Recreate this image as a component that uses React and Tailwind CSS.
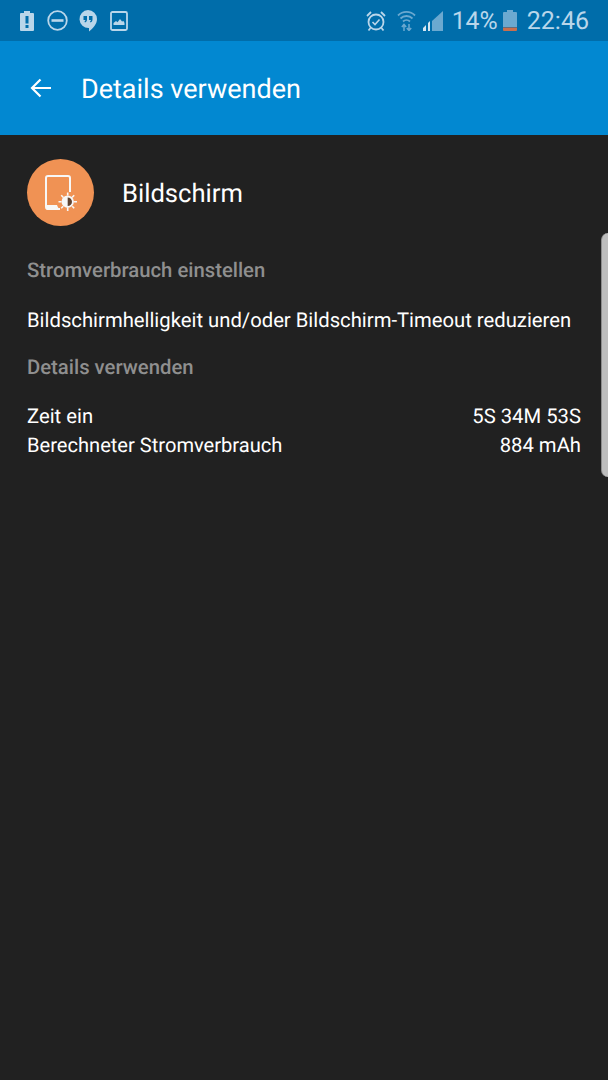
import React from "react";

const StatusLeft = () => (
  <div className="flex items-center">
    <svg className="ml-[20px]" width="14" height="20" viewBox="0 0 14 20">
      <path fill="#b9d6ea" d="M4 0h6v2h3a1 1 0 0 1 1 1v16a1 1 0 0 1-1 1H1a1 1 0 0 1-1-1V3a1 1 0 0 1 1-1h3z" />
      <rect x="5.5" y="5" width="3" height="7.5" fill="#006daa" />
      <rect x="5.5" y="14" width="3" height="3" fill="#006daa" />
    </svg>
    <svg className="ml-[13px]" width="21" height="21" viewBox="0 0 21 21">
      <circle cx="10.5" cy="10.5" r="9.3" fill="none" stroke="#b9d6ea" strokeWidth="1.8" />
      <rect x="4.5" y="9.2" width="12" height="2.6" fill="#b9d6ea" />
    </svg>
    <svg className="ml-[11px]" width="18" height="22" viewBox="0 0 18 22">
      <path fill="#b9d6ea" d="M9 0a9 9 0 0 1 9 9c0 5-4 9.500-8 12.500V18a9 9 0 0 1-1-18z" />
      <path fill="#006daa" d="M4.500 6h3.500v3.500c0 1.500-.8 2.500-2 3l-.6-1c.7-.3 1-.8 1-1.500H4.500zM10 6h3.500v3.500c0 1.500-.8 2.500-2 3l-.6-1c.7-.3 1-.8 1-1.500H10z" />
    </svg>
    <svg className="ml-[13px]" width="18" height="20" viewBox="0 0 18 20">
      <rect x="1" y="1" width="16" height="18" rx="1.500" fill="none" stroke="#b9d6ea" strokeWidth="1.800" />
      <path fill="#b9d6ea" d="M3.500 14v-2l2.500-2 1.500 1.200 2.500-3.200 2 2.500 1.500-.5 1 2V14z" />
    </svg>
  </div>
);

const StatusRight = () => (
  <div className="flex items-center mr-[19px]">
    <svg width="22" height="22" viewBox="0 0 22 22" fill="none" stroke="#b9d6ea">
      <circle cx="11" cy="12" r="7.500" strokeWidth="1.800" />
      <path d="M7.500 12l2.500 2.500 4.500-5" strokeWidth="1.600" />
      <path d="M2 6l4-4M20 6l-4-4M5.500 18l-2 2.500M16.500 18l2 2.500" strokeWidth="1.800" />
    </svg>
    <svg className="ml-[10px]" width="19" height="21" viewBox="0 0 19 21" fill="none" stroke="#6ba9d0" strokeWidth="1.800">
      <path d="M1 5.500a12 12 0 0 1 17 0M3.500 8.500a8.500 8.500 0 0 1 12 0M6 11.500a5 5 0 0 1 7 0" />
      <path d="M7 21v-6M4.800 17l2.200-2.500L9.200 17M12 14v6M9.800 18l2.200 2.500 2.200-2.500" strokeWidth="1.500" />
    </svg>
    <svg className="ml-[6px]" width="21" height="20" viewBox="0 0 21 20">
      <path fill="#6ba9d0" d="M21 0v20H10V10z" />
      <path fill="#d5e6f2" d="M1 20v-3l3-3v6zM6 20v-8l2-2v10z" />
    </svg>
    <span className="ml-[9px] mt-[2px] text-[24.800px] leading-[28px] text-[#b9d6ea]">14%</span>
    <svg className="ml-[5px]" width="14" height="21" viewBox="0 0 14 21">
      <path fill="#6ba9d0" d="M4 0h6v2h3a1 1 0 0 1 1 1v14H0V3a1 1 0 0 1 1-1h3z" />
      <path fill="#c96f4e" d="M0 17.500h14V20a1 1 0 0 1-1 1H1a1 1 0 0 1-1-1z" />
    </svg>
    <span className="ml-[10px] mt-[2px] text-[25px] leading-[28px] text-[#b9d6ea]">22:46</span>
  </div>
);

const ScreenIcon = () => (
  <div className="w-[67px] h-[67px] rounded-full bg-[#f09254] flex items-center justify-center">
    <svg width="32" height="36" viewBox="0 0 32 36">
      <path fill="none" stroke="#f7f7f7" strokeWidth="2" d="M15 34H3a2 2 0 0 1-2-2V3a2 2 0 0 1 2-2h20a2 2 0 0 1 2 2v14" />
      <path fill="#f7f7f7" d="M1 30h11c.5 2 1.500 3 3 5H3a2 2 0 0 1-2-2z" />
      <circle cx="22.700" cy="26.700" r="6.200" fill="#f7f7f7" />
      <path fill="#5f4331" d="M22.700 22.400a4.300 4.300 0 0 1 0 8.600z" />
      <path stroke="#f7f7f7" strokeWidth="1.600" d="M22.700 17.500v3M22.700 33v3M13.500 26.700h3M29 26.700h3M16.200 20.200l2 2M27.200 31.200l2 2M16.200 33.200l2-2M27.200 22.200l2-2" />
    </svg>
  </div>
);

export default function App() {
  return (
    <div className="relative w-[608px] h-[1080px] overflow-hidden bg-[#212121] font-['Roboto',sans-serif] [text-rendering:geometricPrecision]">
      <div className="h-[41px] bg-[#006daa] flex items-center justify-between">
        <StatusLeft />
        <StatusRight />
      </div>
      <div className="h-[94px] bg-[#0288d1] flex items-center">
        <svg className="ml-[30px]" width="21" height="20" viewBox="0 0 21 20" fill="none" stroke="#fff" strokeWidth="2.200">
          <path d="M21 10H2M10.500 1.500L2 10l8.500 8.500" />
        </svg>
        <span className="ml-[30px] mt-[2px] text-[27px] leading-[32px] text-white">Details verwenden</span>
      </div>
      <div className="px-[27px]">
        <div className="flex items-center mt-[24px]">
          <ScreenIcon />
          <span className="ml-[28px] mt-[2px] text-[25.600px] leading-[30px] text-white">Bildschirm</span>
        </div>
        <h2 className="mt-[32px] text-[20.300px] leading-[24px] font-medium text-[#8f8f8f]">Stromverbrauch einstellen</h2>
        <p className="mt-[26px] text-[20.250px] leading-[24px] text-white whitespace-nowrap">Bildschirmhelligkeit und/oder Bildschirm-Timeout reduzieren</p>
        <h2 className="mt-[23px] text-[20.300px] leading-[24px] font-medium text-[#8f8f8f]">Details verwenden</h2>
        <div className="mt-[25px] flex justify-between text-[20.250px] leading-[24px] text-white">
          <span>Zeit ein</span>
          <span>5S 34M 53S</span>
        </div>
        <div className="mt-[5px] flex justify-between text-[20.250px] leading-[24px] text-white">
          <span className="text-[20.100px]">Berechneter Stromverbrauch</span>
          <span>884 mAh</span>
        </div>
      </div>
      <div className="absolute right-0 top-[233px] w-[7px] h-[244px] rounded-l-[10px] bg-[#bdbdbd] border-l border-[#8c8c8c]" />
    </div>
  );
}
